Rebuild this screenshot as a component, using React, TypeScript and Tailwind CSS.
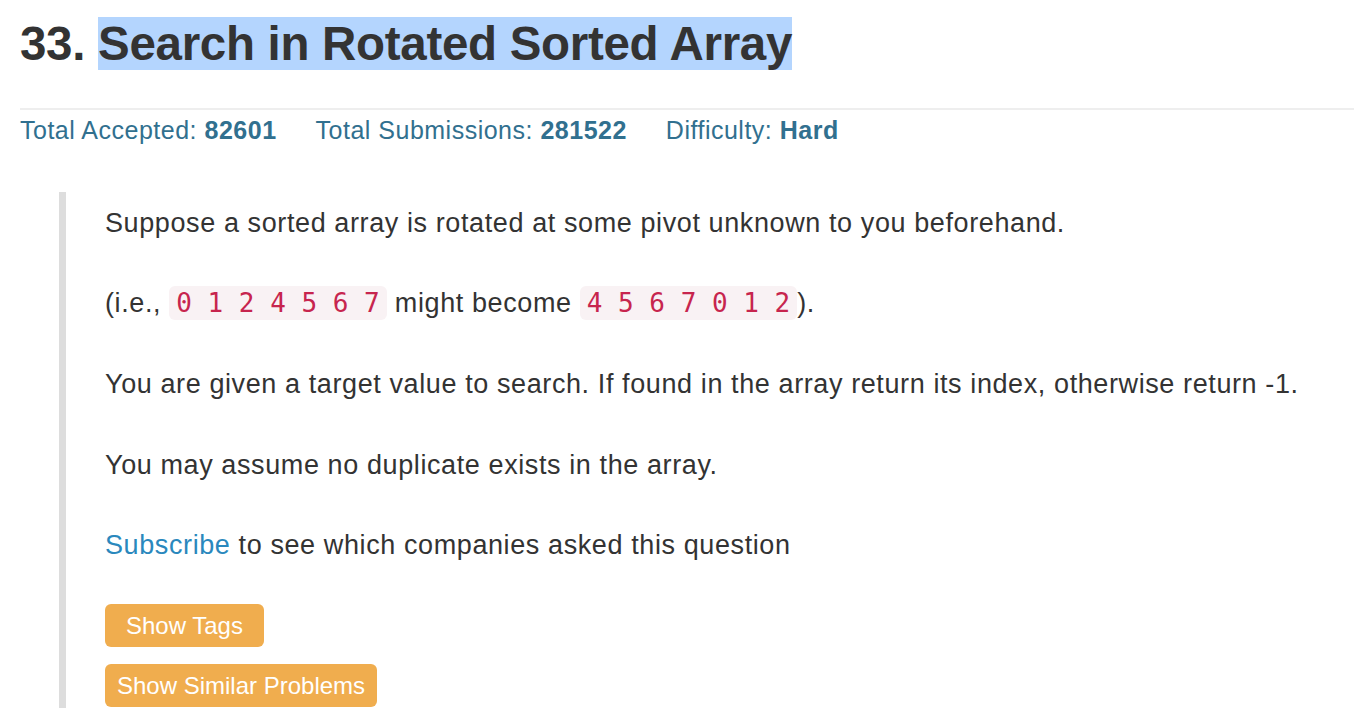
export default function App() {
    return (
        <main className="min-h-screen bg-white pl-[20px] font-['Liberation_Sans',Arial,sans-serif] text-[#333]">
            <h1 className="pt-[17px] text-[47.5px] font-bold leading-[53px] tracking-[-0.3px]">
                33. <span className="bg-[#b4d5fe]">Search in Rotated Sorted Array</span>
            </h1>
            <hr className="mt-[38px] border-t-2 border-[#eee]" />
            <div className="mt-[4px] flex gap-[39px] text-[25px] leading-[32px] tracking-[0.5px] text-[#31708f]">
                <span>Total Accepted: <b>82601</b></span>
                <span>Total Submissions: <b>281522</b></span>
                <span>Difficulty: <b>Hard</b></span>
            </div>
            <blockquote className="ml-[39px] mt-[46px] border-l-[7px] border-[#ddd] pl-[39px] pt-[14px] text-[27px] leading-[34px] tracking-[0.6px]">
                <p>Suppose a sorted array is rotated at some pivot unknown to you beforehand.</p>
                <p className="mt-[46px]">
                    (i.e.,{' '}
                    <code className="rounded-md bg-[#f9f2f4] px-[7px] py-[2px] font-['DejaVu_Sans_Mono',monospace] text-[26px] tracking-normal text-[#c7254e]">0 1 2 4 5 6 7</code>{' '}
                    might become{' '}
                    <code className="rounded-md bg-[#f9f2f4] px-[7px] py-[2px] font-['DejaVu_Sans_Mono',monospace] text-[26px] tracking-normal text-[#c7254e]">4 5 6 7 0 1 2</code>).
                </p>
                <p className="mt-[47px]">You are given a target value to search. If found in the array return its index, otherwise return -1.</p>
                <p className="mt-[47px]">You may assume no duplicate exists in the array.</p>
                <p className="mt-[46px]">
                    <a href="#" className="text-[#2a88bd]">Subscribe</a> to see which companies asked this question
                </p>
                <div className="mt-[42px] flex flex-col items-start gap-[17px] pb-[40px] tracking-normal">
                    <button className="h-[43px] rounded-md bg-[#f0ad4e] px-[21px] text-[24px] text-white">Show Tags</button>
                    <button className="h-[43px] rounded-md bg-[#f0ad4e] px-[12px] text-[24px] text-white">Show Similar Problems</button>
                </div>
            </blockquote>
        </main>
    );
}
